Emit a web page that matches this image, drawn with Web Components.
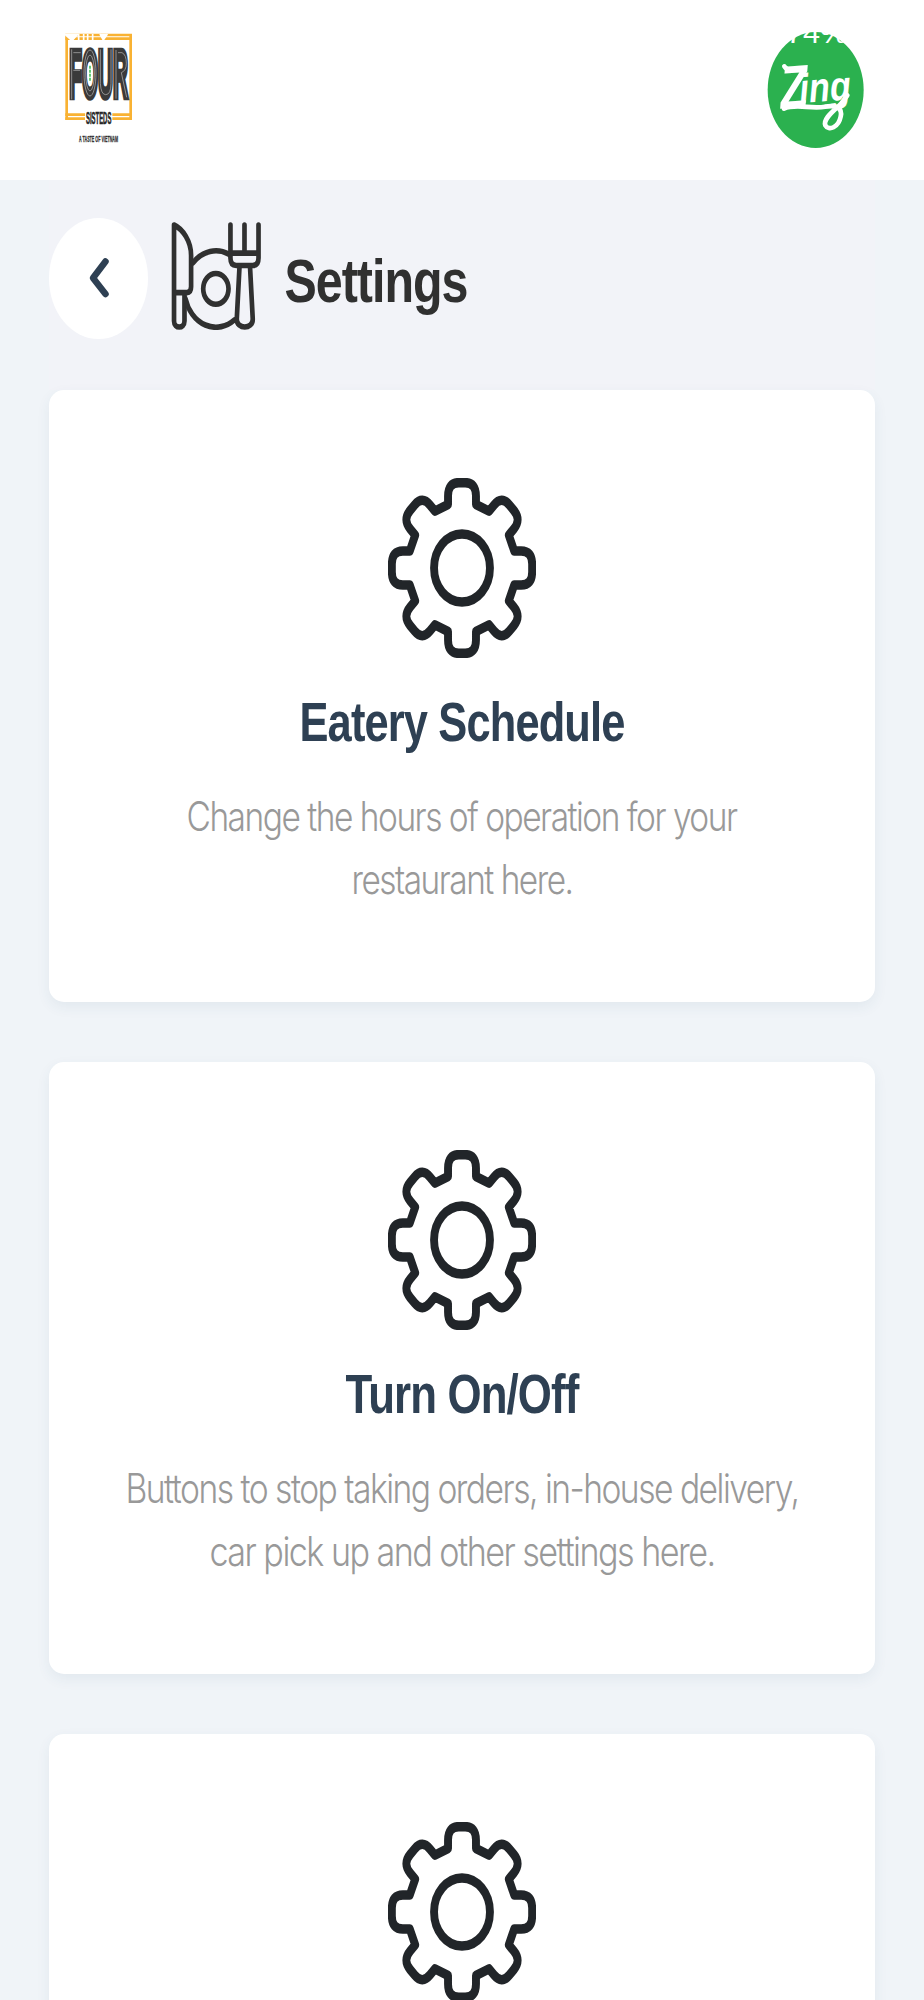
<!DOCTYPE html>
<html lang="en">
<head>
<meta charset="utf-8">
<title>Settings</title>
<style>
  body {
    margin: 0;
    height: 2000px;
    overflow: hidden;
    background-color: #f0f4f8;
    font-family: "Liberation Sans", Arial, sans-serif;
  }

  main {
    padding: 0 49px;
  }

  .cards {
    display: flex;
    flex-direction: column;
    gap: 60px;
  }
</style>
</head>
<body>

<app-header></app-header>
<main>
  <page-title></page-title>
  <div class="cards">
    <settings-card>
      <condensed-line slot="title" width="325" height="80" baseline="58.5" size="56" weight="bold">Eatery Schedule</condensed-line>
      <condensed-line width="550">Change the hours of operation for your</condensed-line>
      <condensed-line width="221">restaurant here.</condensed-line>
    </settings-card>
    <settings-card>
      <condensed-line slot="title" width="233" height="80" baseline="58.5" size="56" weight="bold">Turn On/Off</condensed-line>
      <condensed-line width="673">Buttons to stop taking orders, in-house delivery,</condensed-line>
      <condensed-line width="505">car pick up and other settings here.</condensed-line>
    </settings-card>
    <settings-card></settings-card>
  </div>
</main>

<script>
'use strict'

// one line of text squeezed to a given width
class CondensedLine extends HTMLElement {
  constructor() {
    super();
    this.attachShadow({ mode: 'open' });
  }

  connectedCallback() {
    const width = Number(this.getAttribute('width'));
    const height = this.getAttribute('height') || 63;
    const baseline = this.getAttribute('baseline') || 44.5;
    const size = this.getAttribute('size') || 40.5;
    const bold = this.getAttribute('weight') === 'bold';

    this.shadowRoot.innerHTML = `
      <style>
        :host {
          display: block;
        }
        svg {
          display: block;
          margin: 0 auto;
          overflow: visible;
        }
        text {
          font-family: ${bold ? '"Liberation Sans", Arial' : 'Inter, "Liberation Sans"'}, sans-serif;
          font-weight: ${bold ? 700 : 300};
          font-size: ${size}px;
          letter-spacing: ${bold ? -0.02 : -0.045}em;
          fill: currentColor;
        }
      </style>
      <svg width="${width}" height="${height}">
        <text x="-0.5" y="${baseline}" textLength="${width}" lengthAdjust="spacingAndGlyphs">${this.textContent.trim()}</text>
      </svg>
    `;
  }
}

// cog with eight teeth
class GearIcon extends HTMLElement {
  constructor() {
    super();
    this.attachShadow({ mode: 'open' });

    const tooth = [[-17, -63.5], [-17, -72], [-17, -85.3], [-4, -85.3], [4, -85.3], [17, -85.3], [17, -72], [17, -63.5]];
    let d = '';
    for (let i = 0; i < 8; i++) {
      const a = i * Math.PI / 4;
      const p = tooth.map(([x, y]) =>
        (x * Math.cos(a) - y * Math.sin(a)).toFixed(2) + ' ' + (x * Math.sin(a) + y * Math.cos(a)).toFixed(2));
      d += `${i ? 'L' : 'M'}${p[0]}L${p[1]}Q${p[2]} ${p[3]}L${p[4]}Q${p[5]} ${p[6]}L${p[7]}`;
    }

    this.shadowRoot.innerHTML = `
      <style>
        :host {
          display: block;
          width: 148px;
          height: 180px;
        }
        svg {
          display: block;
          width: 100%;
          height: 100%;
        }
      </style>
      <svg viewBox="-90 -90 180 180" preserveAspectRatio="none" fill="none" stroke="#212529" stroke-width="9.6" stroke-linejoin="round">
        <path d="${d}Z"/>
        <circle r="34"/>
      </svg>
    `;
  }
}

const cardTemplate = document.createElement('template');
cardTemplate.innerHTML = `
<style>
  :host {
    display: flex;
    flex-direction: column;
    align-items: center;
    box-sizing: border-box;
    height: 612px;
    flex-shrink: 0;
    padding-top: 88px;
    background-color: #fff;
    border-radius: 15px;
    box-shadow: 0 5px 14px rgba(40, 80, 120, .07);
  }

  .title {
    margin: 24px 0;
    color: #2e4053;
  }

  .text {
    color: #999;
  }
</style>
<gear-icon></gear-icon>
<div class="title"><slot name="title"></slot></div>
<div class="text"><slot></slot></div>
`;

class SettingsCard extends HTMLElement {
  constructor() {
    super();
    this.attachShadow({ mode: 'open' });
    this.shadowRoot.appendChild(cardTemplate.content.cloneNode(true));
  }
}

const titleTemplate = document.createElement('template');
titleTemplate.innerHTML = `
<style>
  :host {
    display: flex;
    align-items: flex-start;
    box-sizing: border-box;
    height: 210px;
    padding-top: 38px;
    background-color: #f2f3f8;
  }

  svg {
    display: block;
  }

  .back {
    width: 99px;
    height: 121px;
    border-radius: 50%;
    background-color: #fff;
  }

  .plate {
    margin: 4px 0 0 23px;
  }

  condensed-line {
    margin: 12px 0 0 24px;
    color: #303030;
  }
</style>
<div class="back">
  <svg width="99" height="121" fill="none" stroke="#2e4053" stroke-linecap="round" stroke-linejoin="round" stroke-width="6.5">
    <path d="M56.5 43.5L44 60L56.5 76"/>
  </svg>
</div>
<svg class="plate" width="90" height="108" viewBox="0 0 327 323" preserveAspectRatio="none" fill="none" stroke="#303030" stroke-width="17" stroke-linecap="round" stroke-linejoin="round">
  <path d="M11 9C43 21 73 58 73 100V194Q73 211 58 211H11ZM11 211V296C11 320 49 320 49 296V211"/>
  <path d="M80 122A114 114 0 0 1 212 97M53 230A114 114 0 0 0 230 293"/>
  <circle cx="163" cy="200" r="46"/>
  <path d="M216 9V108Q216 130 237 130H297Q318 130 318 108V9M267 9V93M216 93H318"/>
  <path d="M249 132L239 290C238 322 298 322 297 290L287 132"/>
</svg>
<condensed-line width="183" height="90" baseline="72" size="62" weight="bold">Settings</condensed-line>
`;

class PageTitle extends HTMLElement {
  constructor() {
    super();
    this.attachShadow({ mode: 'open' });
    this.shadowRoot.appendChild(titleTemplate.content.cloneNode(true));
  }
}

const headerTemplate = document.createElement('template');
headerTemplate.innerHTML = `
<style>
  :host {
    display: flex;
    justify-content: space-between;
    box-sizing: border-box;
    height: 180px;
    padding: 20px 44px 0 50px;
    background-color: #fff;
  }

  svg {
    overflow: visible;
  }

  text {
    font-family: "Liberation Sans", Arial, sans-serif;
  }
</style>
<svg width="100" height="135" viewBox="0 0 300 405">
  <g fill="none" stroke="#f9b233">
    <path d="M50 46V300M242 46V300" stroke-width="8"/>
    <path d="M46 45H246M46 56H246" stroke-width="8"/>
    <path d="M46 284H105M46 296H105M187 284H246M187 296H246" stroke-width="8"/>
  </g>
  <path d="M46 44L66 62L82 44ZM86 42V60M101 42V60M113 42V60M128 42V60M150 42L160 60L172 42" fill="#fff" stroke="#fff" stroke-width="5"/>
  <text x="58" y="230" font-size="200" font-weight="bold" fill="#3a3a3a" stroke="#3a3a3a" stroke-width="20" textLength="176" lengthAdjust="spacingAndGlyphs">FOUR</text>
  <!-- grooves of the record lettering -->
  <g fill="none" stroke="#bbb" stroke-width="2">
    <path d="M65 88V238M70 98H92M70 151H90"/>
    <ellipse cx="120" cy="159" rx="18" ry="69"/>
    <ellipse cx="120" cy="159" rx="13" ry="54"/>
    <path d="M151 88V190Q153 224 167 224Q183 224 183 190V88"/>
    <path d="M198 90V236M204 98H216Q229 104 229 130Q229 152 214 158L230 232"/>
  </g>
  <ellipse cx="120" cy="159" rx="8" ry="34" fill="#fff"/>
  <path d="M120 137V183" stroke="#45c25a" stroke-width="5" stroke-dasharray="9 3"/>
  <text x="108" y="311" font-size="52" font-weight="bold" fill="#262626" stroke="#262626" stroke-width="2" textLength="76" lengthAdjust="spacingAndGlyphs">SISTEDS</text>
  <text x="87" y="365" font-size="28" font-weight="bold" fill="#333" stroke="#333" textLength="117" lengthAdjust="spacingAndGlyphs">A TASTE OF VIETNAM</text>
</svg>
<svg width="130" height="140" viewBox="0 0 390 420">
  <ellipse cx="197" cy="210" rx="144" ry="174" fill="#2bb14f"/>
  <text x="108" y="69" font-size="88" fill="#fff" textLength="184" lengthAdjust="spacingAndGlyphs">74%</text>
  <g fill="none" stroke="#fff" stroke-width="14" stroke-linecap="round" stroke-linejoin="round">
    <path d="M103 139Q112 154 135 148M102 266C135 250 185 268 225 260C260 254 278 264 272 290C266 322 236 334 226 316C218 296 252 272 274 250L292 226"/>
  </g>
  <text transform="translate(94 266) rotate(-4)" font-weight="bold" font-style="italic" fill="#fff"><tspan font-size="182" textLength="84" lengthAdjust="spacingAndGlyphs">Z</tspan><tspan x="58" y="-13" font-size="124" textLength="154" lengthAdjust="spacingAndGlyphs">ing</tspan></text>
</svg>
`;

class AppHeader extends HTMLElement {
  constructor() {
    super();
    this.attachShadow({ mode: 'open' });
    this.shadowRoot.appendChild(headerTemplate.content.cloneNode(true));
  }
}

window.customElements.define('condensed-line', CondensedLine);
window.customElements.define('gear-icon', GearIcon);
window.customElements.define('settings-card', SettingsCard);
window.customElements.define('page-title', PageTitle);
window.customElements.define('app-header', AppHeader);
</script>
</body>
</html>
